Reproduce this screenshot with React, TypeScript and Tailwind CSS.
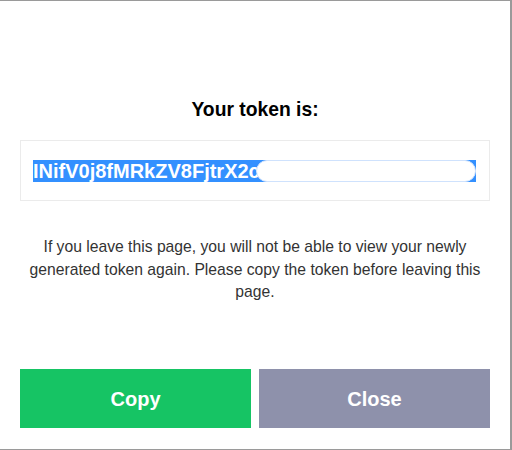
import React from "react";

const App: React.FC = () => {
  return (
    <div className="w-[512px] h-[450px] bg-white border-t border-r-2 border-b border-[#9a9a9a] px-5 pb-[21px] flex flex-col font-['Liberation_Sans',Arial,sans-serif]">
      {/* TITLE */}
      <h2 className="mt-[98px] text-center text-[19.3px] leading-[22px] font-bold text-black">
        Your token is:
      </h2>

      {/* TOKEN BOX */}
      <div className="mt-[19px] h-[61px] border border-[#ebebeb] pl-3 pr-[13px] flex items-center">
        <div className="flex-1 flex h-[22px] bg-[#3390ff]">
          <span className="text-white font-bold text-[20px] leading-[22px] whitespace-nowrap">
            INifV0j8fMRkZV8FjtrX2c
          </span>
          <div className="flex-1 -ml-[4px] rounded-full bg-white border border-[#cfe2fd]" />
        </div>
      </div>

      {/* WARNING */}
      <p className="mt-[35px] text-center text-[15.7px] leading-[22.5px] text-[#333]">
        If you leave this page, you will not be able to view your newly generated token
        again. Please copy the token before leaving this page.
      </p>

      {/* BUTTONS */}
      <div className="mt-auto grid grid-cols-2 gap-2">
        <button className="h-[59px] bg-[#16c464] text-white font-bold text-[20px]">
          Copy
        </button>
        <button className="h-[59px] bg-[#8e91ab] text-white font-bold text-[20px]">
          Close
        </button>
      </div>
    </div>
  );
};

export default App;
